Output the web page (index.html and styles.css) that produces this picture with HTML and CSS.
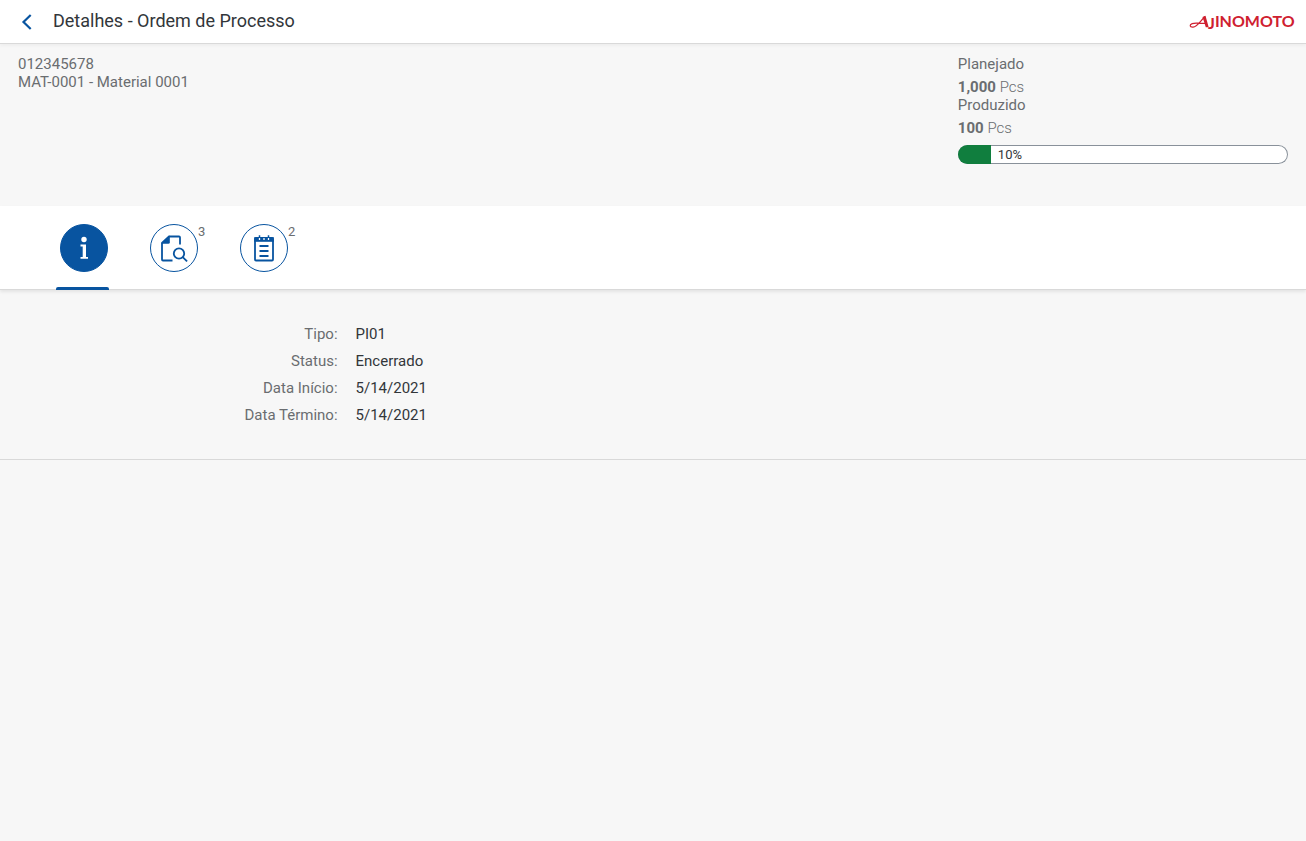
FILE: index.html
```html
<!DOCTYPE html>
<html lang="pt-BR">
<head>
<meta charset="utf-8">
<title>Detalhes - Ordem de Processo</title>
<link rel="stylesheet" href="styles.css">
</head>
<body>
<header class="shell">
  <button class="back" type="button" aria-label="Voltar">
    <svg width="12" height="16" viewBox="0 0 12 16"><path d="M9.700 1L2.500 8l7.200 7" fill="none" stroke="currentColor" stroke-width="2.200"/></svg>
  </button>
  <h1 class="title">Detalhes - Ordem de Processo</h1>
  <svg class="logo" width="107" height="20" viewBox="0 0 107 20" role="img" aria-label="Ajinomoto">
    <path d="M16 4.500C12 8 8.500 14.800 4 15.200C.6 15.400.2 12.800 3.200 11.600C6.500 10.400 10 11.600 16 11.400" fill="none" stroke="currentColor" stroke-width="1.200"/>
    <path d="M13.500 5l3-1.300 3.200 11.600h-2.900z" fill="currentColor"/>
    <text class="logo-text" x="19" y="15"><tspan dy="2">J</tspan><tspan dy="-2">INOMOTO</tspan></text>
  </svg>
</header>
<main>
  <section class="summary">
    <div class="order">
      <div>012345678</div>
      <div>MAT-0001 - Material 0001</div>
    </div>
    <div class="amounts">
      <div>Planejado</div>
      <div class="amount"><strong>1,000</strong> <span class="unit">Pcs</span></div>
      <div>Produzido</div>
      <div class="amount"><strong>100</strong> <span class="unit">Pcs</span></div>
      <div class="progress" role="progressbar" aria-label="Produzido" aria-valuenow="10" aria-valuemin="0" aria-valuemax="100">
        <div class="progress-fill" style="width:10%"></div>
        <span class="progress-text">10%</span>
      </div>
    </div>
  </section>
  <nav class="tabs" role="tablist">
    <button class="tab selected" type="button" role="tab" aria-selected="true" aria-label="Informações">
      <span class="circle"><svg width="28" height="28" viewBox="0 0 28 28" fill="currentColor"><circle cx="14" cy="5.500" r="2.700"/><path d="M10.500 10.500h5.500v12.500h2v1.800h-7.500v-1.800h2.200v-10.500h-2.200z"/></svg></span>
    </button>
    <button class="tab" type="button" role="tab" aria-selected="false" aria-label="Inspeção">
      <span class="circle"><svg width="28" height="28" viewBox="0 0 28 28" fill="none" stroke="currentColor" stroke-width="1.800"><path d="M12.500 26.500H3a1 1 0 0 1-1-1V9l7-6.500h10a1 1 0 0 1 1 1V10.500"/><path d="M1.200 9.800L9.800 1.600V8.300q0 1.500-1.500 1.500z" fill="currentColor" stroke="none"/><circle cx="19" cy="19.500" r="5.200"/><path d="M22.700 23.200l4.400 4.200"/></svg></span>
      <span class="count">3</span>
    </button>
    <button class="tab" type="button" role="tab" aria-selected="false" aria-label="Apontamentos">
      <span class="circle"><svg width="28" height="28" viewBox="0 0 28 28" fill="none" stroke="currentColor" stroke-width="1.800"><rect x="5" y="4" width="18" height="22.500" rx="1"/><path d="M4.200 3.200h19.600v4.600H4.200z" fill="currentColor" stroke="none"/><path d="M9.500 1.200v3M18.500 1.200v3" stroke-width="1.500"/><path d="M9.500 4v2M14 4v2M18.500 4v2" stroke="#fff" stroke-width="1.300"/><path d="M9.500 12h9M9.500 17h9M9.500 22h9"/></svg></span>
      <span class="count">2</span>
    </button>
  </nav>
  <dl class="details">
    <dt>Tipo:</dt><dd>PI01</dd>
    <dt>Status:</dt><dd>Encerrado</dd>
    <dt>Data Início:</dt><dd>5/14/2021</dd>
    <dt>Data Término:</dt><dd>5/14/2021</dd>
  </dl>
</main>
</body>
</html>
```
FILE: styles.css
```css
* { box-sizing: border-box; }
body {
  margin: 0;
  min-height: 100vh;
  background: #f7f7f7;
  color: #6a6d70;
  font-family: Roboto, "Liberation Sans", sans-serif;
  font-size: 15px;
  line-height: 18px;
}
.shell {
  display: flex;
  align-items: center;
  height: 44px;
  padding: 0 10px 0 16px;
  background: #fff;
  border-bottom: 1px solid #d9d9d9;
  box-shadow: 0 2px 3px rgba(0, 0, 0, .04);
}
.back {
  display: flex;
  justify-content: center;
  width: 22px;
  padding: 0;
  border: 0;
  background: none;
  color: #0854a0;
}
.title {
  flex: 1;
  margin: 0 0 2px 15px;
  color: #32363a;
  font-size: 18px;
  font-weight: 400;
  line-height: 24px;
}
.logo { color: #cf2030; }
.logo-text {
  fill: currentColor;
  font-family: Lato, sans-serif;
  font-size: 16px;
  font-weight: 700;
}
.summary {
  display: flex;
  justify-content: space-between;
  min-height: 162px;
  padding: 11px 18px 0;
}
.amounts { width: 26%; }
.amount { padding-top: 5px; }
.unit { font-weight: 300; }
.progress {
  display: flex;
  align-items: center;
  height: 19px;
  margin-top: 8px;
  overflow: hidden;
  background: #fff;
  border-radius: 10px;
  box-shadow: inset 0 0 0 1px #89919a;
}
.progress-fill {
  height: 100%;
  background: #107e3e;
}
.progress-text {
  padding-left: 7px;
  color: #32363a;
  font-size: 13px;
}
.tabs {
  display: flex;
  gap: 37px;
  height: 84px;
  padding-left: 56px;
  background: #fff;
  border-bottom: 1px solid #d9d9d9;
  box-shadow: 0 2px 3px rgba(0, 0, 0, .08);
}
.tab {
  position: relative;
  width: 53px;
  height: 84px;
  padding: 18px 0 0 4px;
  border: 0;
  background: none;
  color: #0854a0;
  font: inherit;
  display: flex;
  align-items: flex-start;
}
.circle {
  display: flex;
  flex: none;
  align-items: center;
  justify-content: center;
  width: 48px;
  height: 48px;
  border: 1px solid #0854a0;
  border-radius: 50%;
}
.tab.selected::after {
  content: "";
  position: absolute;
  left: 0;
  right: 0;
  bottom: 0;
  height: 3px;
  border-radius: 2px 2px 0 0;
  background: #0854a0;
}
.selected .circle {
  background: #0854a0;
  color: #fff;
}
.count {
  color: #6a6d70;
  font-size: 13px;
  line-height: 16px;
}
.details {
  display: grid;
  grid-template-columns: 26% 1fr;
  margin: 0;
  padding: 31px 0 30px;
  border-bottom: 1px solid #d9d9d9;
  line-height: 27px;
}
.details dt {
  padding-right: 2px;
  text-align: right;
}
.details dd {
  margin: 0 0 0 16px;
  color: #32363a;
}
```
